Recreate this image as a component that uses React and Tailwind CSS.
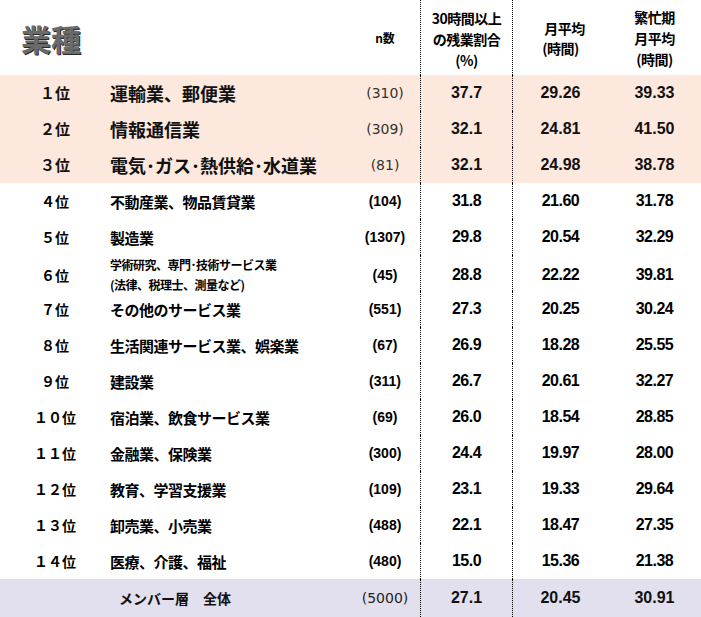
import React from "react";

const JP = { fontFamily: '"Noto Sans CJK JP", "Noto Sans", sans-serif' };

const top = [
  ["１位", "運輸業、郵便業", "(310)", "37.7", "29.26", "39.33"],
  ["２位", "情報通信業", "(309)", "32.1", "24.81", "41.50"],
  ["３位", "電気･ガス･熱供給･水道業", "(81)", "32.1", "24.98", "38.78"],
];

const rest = [
  ["４位", "不動産業、物品賃貸業", "(104)", "31.8", "21.60", "31.78"],
  ["５位", "製造業", "(1307)", "29.8", "20.54", "32.29"],
  ["６位", null, "(45)", "28.8", "22.22", "39.81"],
  ["７位", "その他のサービス業", "(551)", "27.3", "20.25", "30.24"],
  ["８位", "生活関連サービス業、娯楽業", "(67)", "26.9", "18.28", "25.55"],
  ["９位", "建設業", "(311)", "26.7", "20.61", "32.27"],
  ["１０位", "宿泊業、飲食サービス業", "(69)", "26.0", "18.54", "28.85"],
  ["１１位", "金融業、保険業", "(300)", "24.4", "19.97", "28.00"],
  ["１２位", "教育、学習支援業", "(109)", "23.1", "19.33", "29.64"],
  ["１３位", "卸売業、小売業", "(488)", "22.1", "18.47", "27.35"],
  ["１４位", "医療、介護、福祉", "(480)", "15.0", "15.36", "21.38"],
];

const grid = "grid grid-cols-[110px_240px_70px_92px_96px_93px]";
const line = "border-l border-dotted border-black";

function TopRow({ r }) {
  return (
    <div className={`${grid} h-[36px] items-center bg-[#fce8dc] text-[#111]`}>
      <div className="flex justify-center font-bold text-[15px]" style={JP}>{r[0]}</div>
      <div className="font-bold text-[18px] leading-none whitespace-nowrap" style={JP}>{r[1]}</div>
      <div className="flex justify-center text-[14px] text-[#333] font-['DejaVu_Sans',sans-serif]">{r[2]}</div>
      <div className={`${line} h-full flex items-center justify-center font-bold text-[16px] font-['Liberation_Sans',sans-serif]`}>{r[3]}</div>
      <div className={`${line} h-full flex items-center justify-center font-bold text-[16px] font-['Liberation_Sans',sans-serif]`}>{r[4]}</div>
      <div className="flex justify-center font-bold text-[16px] font-['Liberation_Sans',sans-serif]">{r[5]}</div>
    </div>
  );
}

function Row({ r }) {
  return (
    <div className={`${grid} h-[36px] items-center text-black`}>
      <div className="flex justify-center font-bold text-[14px]" style={JP}>{r[0]}</div>
      {r[1] ? (
        <div className="font-bold text-[15px] leading-none tracking-[-0.5px] whitespace-nowrap" style={JP}>{r[1]}</div>
      ) : (
        <div className="flex flex-col font-bold text-[12px] leading-[20px] tracking-[-0.5px] whitespace-nowrap" style={JP}>
          <span>学術研究、専門･技術サービス業</span>
          <span className="pl-[0px]">(法律、税理士、測量など)</span>
        </div>
      )}
      <div className="flex justify-center font-bold text-[14px] font-['Liberation_Sans',sans-serif]">{r[2]}</div>
      <div className={`${line} h-full flex items-center justify-center font-bold text-[16px] tracking-[-0.5px] font-['Liberation_Sans',sans-serif]`}>{r[3]}</div>
      <div className={`${line} h-full flex items-center justify-center font-bold text-[16px] tracking-[-0.5px] font-['Liberation_Sans',sans-serif]`}>{r[4]}</div>
      <div className="flex justify-center font-bold text-[16px] tracking-[-0.5px] font-['Liberation_Sans',sans-serif]">{r[5]}</div>
    </div>
  );
}

export default function App() {
  return (
    <div className="w-[701px] h-[617px] bg-white overflow-hidden">
      <div className={`${grid} h-[75px] text-black`}>
        <div className="col-span-2 flex items-center pl-[21px]">
          <span
            className="font-bold text-[30px] leading-none text-[#6a6a6a] [text-shadow:1px_1px_0_#2a2a2a]"
            style={JP}
          >
            業種
          </span>
        </div>
        <div className="flex items-center justify-center font-bold text-[12px]" style={JP}>n数</div>
        <div className={`${line} flex flex-col items-center pt-[8px] font-bold text-[14px] leading-[21px] tracking-[-0.5px]`} style={JP}>
          <span>30時間以上</span>
          <span>の残業割合</span>
          <span>(%)</span>
        </div>
        <div className={`${line} flex flex-col items-center pt-[18px] font-bold text-[14px] leading-[20px] tracking-[-0.5px]`} style={JP}>
          <span className="pl-[8px]">月平均</span>
          <span>(時間)</span>
        </div>
        <div className="flex flex-col items-center pt-[7px] font-bold text-[14px] leading-[21px] tracking-[-0.5px]" style={JP}>
          <span>繁忙期</span>
          <span>月平均</span>
          <span>(時間)</span>
        </div>
      </div>
      {top.map((r) => (
        <TopRow key={r[0]} r={r} />
      ))}
      {rest.map((r) => (
        <Row key={r[0]} r={r} />
      ))}
      <div className={`${grid} h-[38px] items-center bg-[#e2dfee] text-[#111]`}>
        <div className="col-span-2 flex justify-center font-bold text-[14px]" style={JP}>
          メンバー層　全体
        </div>
        <div className="flex justify-center text-[14px] text-[#222] font-['DejaVu_Sans',sans-serif]">(5000)</div>
        <div className={`${line} h-full flex items-center justify-center font-bold text-[16px] font-['Liberation_Sans',sans-serif]`}>27.1</div>
        <div className={`${line} h-full flex items-center justify-center font-bold text-[16px] font-['Liberation_Sans',sans-serif]`}>20.45</div>
        <div className="flex justify-center font-bold text-[16px] font-['Liberation_Sans',sans-serif]">30.91</div>
      </div>
    </div>
  );
}
